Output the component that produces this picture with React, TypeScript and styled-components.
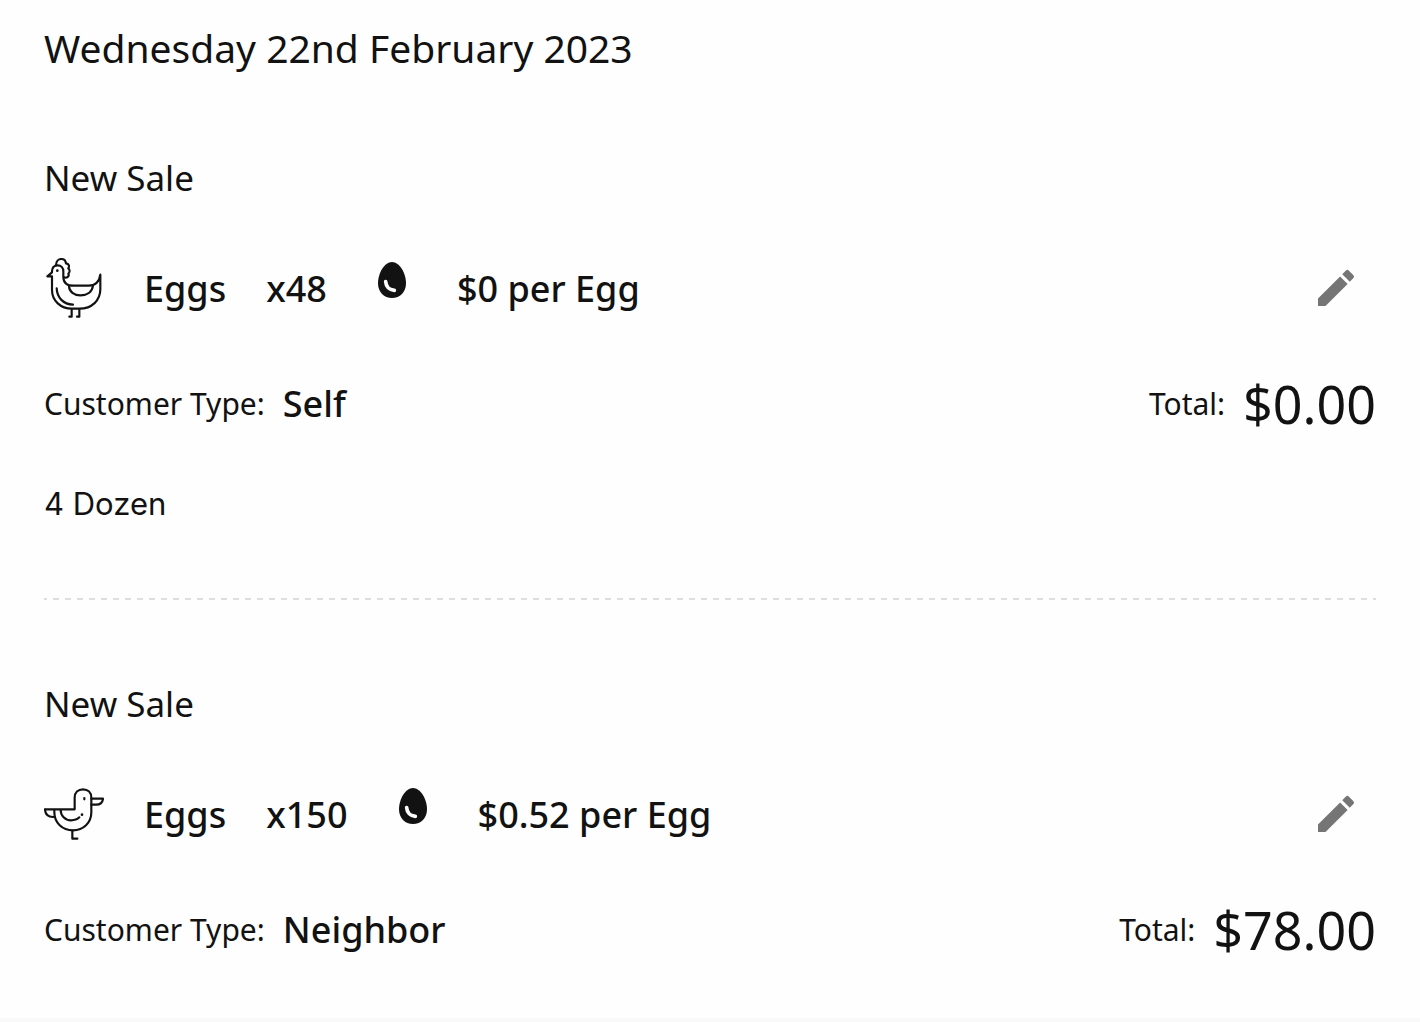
import React from "react";
import styled, { createGlobalStyle } from "styled-components";

const GlobalStyle = createGlobalStyle`
  *, *::before, *::after { box-sizing: border-box; }
  body {
    margin: 0;
    background: #fefefe;
    color: #121212;
    font-family: "Noto Sans", "Open Sans", sans-serif;
  }
`;

const Page = styled.main`
  padding: 16px 44px 0;
  border-bottom: 4px solid #f9f9f9;
`;

const DateHeading = styled.h1`
  margin: 0;
  font-size: 39px;
  line-height: 64px;
  font-weight: 400;
`;

const Sale = styled.article`
  padding: 72px 0 52px;

  & + & {
    padding-top: 80px;
    background: repeating-linear-gradient(90deg, #dedede 0 6px, transparent 6px 12px) -3px 0 / calc(100% + 3px) 2px no-repeat;
  }
`;

const SaleTitle = styled.h2`
  margin: 0;
  font-size: 35px;
  line-height: 52px;
  font-weight: 400;
`;

const ItemRow = styled.div`
  display: flex;
  align-items: center;
  height: 64px;
  margin-top: 52px;
  font-size: 36px;
  font-weight: 500;
`;

const BirdIcon = styled.svg`
  width: 60px;
  height: 60px;
  margin-right: 40px;
  fill: none;
  stroke: #121212;
  stroke-width: 6.5;
  stroke-linecap: round;
  stroke-linejoin: round;
`;

const Product = styled.span`
  margin-right: 40px;
`;

const Count = styled.span`
  margin-right: 50px;
`;

const EggIcon = styled.svg`
  width: 30px;
  height: 36px;
  margin: 0 50px 16px 0;
`;

const EditButton = styled.button`
  display: flex;
  align-items: center;
  justify-content: center;
  width: 80px;
  height: 64px;
  margin-left: auto;
  padding: 0;
  border: 0;
  background: none;
  cursor: pointer;
`;

const PencilIcon = styled.svg`
  width: 48px;
  height: 48px;
  fill: #757575;
`;

const SummaryRow = styled.div`
  display: flex;
  justify-content: space-between;
  height: 72px;
  margin-top: 48px;
`;

const Field = styled.div`
  display: flex;
  align-items: center;
  gap: 18px;
  line-height: 72px;
`;

const Label = styled.span`
  font-size: 30px;
`;

const Customer = styled.span`
  font-size: 36px;
  font-weight: 500;
`;

const Amount = styled.span`
  font-size: 52px;
`;

const Note = styled.p`
  margin: 38px 0 16px;
  font-family: Inter, sans-serif;
  font-size: 31px;
  line-height: 52px;
`;

type Bird = "chicken" | "duck";

function BirdGlyph({ bird }: { bird: Bird }) {
  if (bird === "chicken") {
    return (
      <BirdIcon viewBox="30 24 180 180" role="img" aria-label="Chicken">
        <path d="M54 80V120C54 152 80 176 114 176H136C174 176 199 151 199 118V74C196 94 184 107 164 107H119C98 107 88 98 88 80V64C88 53 81 46 71 46C60 46 54 54 54 64V67L40 79H54" />
        <path d="M66 46C66 34 73 27 82 27C90 27 95 33 96 40C105 41 107 49 103 55C109 60 107 68 103 71C107 79 99 85 90 82" />
        <path d="M105 109C106 125 120 136 139 136C159 136 175 126 177 106" />
        <path d="M68 115C69 143 88 163 117 164" />
        <path d="M113 177V200H106M136 177V200H129" />
        <circle cx="70" cy="62" r="4" fill="#121212" stroke="none" />
      </BirdIcon>
    );
  }
  return (
    <BirdIcon viewBox="30 18 180 180" role="img" aria-label="Duck">
      <path d="M33 94H122V59C122 44 132 34 147 34C162 34 172 44 172 59V103C172 135 148 157 117 157C85 157 61 134 61 103V95" />
      <path d="M33 95C34 109 43 117 57 117H62" />
      <path d="M172 62H207C206 73 198 80 186 80H172" />
      <path d="M80 96C80 113 93 127 111 127C121 127 130 124 136 118" />
      <path d="M115 158V182H130" />
      <path d="M151 60V64" />
      <circle cx="144" cy="110" r="4" fill="#121212" stroke="none" />
    </BirdIcon>
  );
}

interface SaleData {
  bird: Bird;
  count: number;
  price: string;
  customer: string;
  total: string;
  note?: string;
}

const sales: SaleData[] = [
  { bird: "chicken", count: 48, price: "$0", customer: "Self", total: "$0.00", note: "4 Dozen" },
  { bird: "duck", count: 150, price: "$0.52", customer: "Neighbor", total: "$78.00" },
];

function SaleEntry({ sale }: { sale: SaleData }) {
  return (
    <Sale>
      <SaleTitle>New Sale</SaleTitle>
      <ItemRow>
        <BirdGlyph bird={sale.bird} />
        <Product>Eggs</Product>
        <Count>x{sale.count}</Count>
        <EggIcon viewBox="33 29 90 108" aria-hidden="true">
          <path fill="#121212" d="M78 29C100 29 120 62 120 93C120 120 102 137 78 137C54 137 36 120 36 93C36 62 56 29 78 29Z" />
          <path fill="none" stroke="#fefefe" strokeWidth="11" strokeLinecap="round" d="M59 88C60 103 70 113 85 114" />
        </EggIcon>
        <span>{sale.price} per Egg</span>
        <EditButton type="button" aria-label="Edit sale">
          <PencilIcon viewBox="0 0 24 24" aria-hidden="true">
            <path d="M3 17.25V21h3.75L17.81 9.94l-3.75-3.75L3 17.25zM20.71 7.04a.996.996 0 0 0 0-1.41l-2.34-2.34a.996.996 0 0 0-1.41 0l-1.83 1.83 3.75 3.75 1.83-1.83z" />
          </PencilIcon>
        </EditButton>
      </ItemRow>
      <SummaryRow>
        <Field>
          <Label>Customer Type:</Label>
          <Customer>{sale.customer}</Customer>
        </Field>
        <Field>
          <Label>Total:</Label>
          <Amount>{sale.total}</Amount>
        </Field>
      </SummaryRow>
      {sale.note && <Note>{sale.note}</Note>}
    </Sale>
  );
}

export default function App() {
  return (
    <>
      <GlobalStyle />
      <Page>
        <DateHeading>Wednesday 22nd February 2023</DateHeading>
        {sales.map((sale) => (
          <SaleEntry key={sale.bird} sale={sale} />
        ))}
      </Page>
    </>
  );
}
